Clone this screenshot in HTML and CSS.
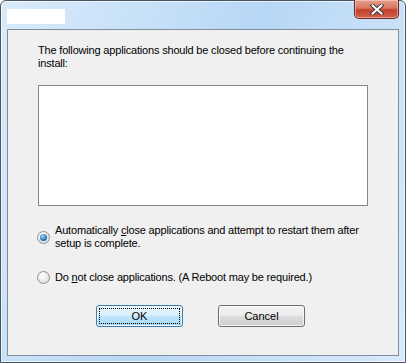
FILE: index.html
```html
<!DOCTYPE html>
<html>
<head>
  <meta charset="UTF-8">
  <title>Setup</title>
  <link rel="stylesheet" href="styles.css">
</head>
<body>
  <div class="window">
    <div class="titlebar">
      <div class="title-blank"></div>
      <button class="close-btn" aria-label="Close">
        <svg width="14" height="11" viewBox="0 0 14 11">
          <path d="M2.5 1.5 L11.5 9.5 M11.5 1.5 L2.5 9.5" stroke="#3b3b3b" stroke-width="4" stroke-linecap="square"/>
          <path d="M2.5 1.5 L11.5 9.5 M11.5 1.5 L2.5 9.5" stroke="#ffffff" stroke-width="2" stroke-linecap="square"/>
        </svg>
      </button>
    </div>

    <div class="client">
      <p class="intro">The following applications should be closed before continuing the install:</p>

      <div class="listbox"></div>

      <label class="radio-row first">
        <span class="radio checked"></span>
        <span class="radio-text">Automatically <u>c</u>lose applications and attempt to restart them after setup is complete.</span>
      </label>

      <label class="radio-row second">
        <span class="radio"></span>
        <span class="radio-text">Do <u>n</u>ot close applications. (A Reboot may be required.)</span>
      </label>

      <div class="buttons">
        <button class="btn default"><span class="focus">OK</span></button>
        <button class="btn">Cancel</button>
      </div>
    </div>
  </div>
</body>
</html>
```

FILE: styles.css
```css
* {
  box-sizing: border-box;
  margin: 0;
  padding: 0;
}

body {
  width: 406px;
  height: 363px;
  background: #ffffff;
  font-family: 'Liberation Sans', Arial, sans-serif;
  font-size: 11px;
  letter-spacing: -0.18px;
  color: #000000;
}

.window {
  width: 406px;
  height: 363px;
  border: 1px solid #4a5562;
  border-radius: 6px 6px 0 0;
  padding: 0 6px 6px 6px;
  display: flex;
  flex-direction: column;
  background: linear-gradient(110deg, #d9eafa 0%, #c6e0f8 30%, #b7d7f6 50%, #c9e1f8 75%, #d8e9fa 100%);
  box-shadow: inset 0 0 0 1px rgba(255, 255, 255, 0.6);
}

.titlebar {
  height: 28px;
  display: flex;
  justify-content: space-between;
  align-items: flex-start;
}

.title-blank {
  width: 58px;
  height: 15px;
  margin-top: 8px;
  background: #ffffff;
}

.close-btn {
  width: 45px;
  height: 19px;
  margin-top: -1px;
  border: 1px solid #6d2a24;
  border-top: none;
  border-radius: 0 0 5px 5px;
  background: linear-gradient(to bottom, #e6a08e 0%, #d8765f 45%, #c4402d 55%, #d4604a 100%);
  display: flex;
  align-items: center;
  justify-content: center;
  box-shadow: inset 0 0 0 1px rgba(255, 220, 210, 0.5);
}

.client {
  flex: 1;
  background: #f0f0f0;
  border: 1px solid #7f8d9c;
  padding: 14px 30px 0 30px;
}

.intro {
  line-height: 13px;
  width: 330px;
}

.listbox {
  width: 330px;
  height: 121px;
  margin-top: 15px;
  background: #ffffff;
  border: 1px solid #828790;
}

.radio-row {
  display: flex;
  align-items: center;
  line-height: 13px;
  margin-left: -1px;
}

.radio-row.first {
  margin-top: 18px;
}

.radio-row.second {
  margin-top: 21px;
}

.radio {
  flex: none;
  width: 13px;
  height: 13px;
  margin-right: 5px;
  border-radius: 50%;
  border: 1px solid #8e8f8f;
  background: radial-gradient(circle at 40% 35%, #ffffff 0%, #e6e6e6 60%, #cfcfcf 100%);
  position: relative;
}

.radio.checked::after {
  content: "";
  position: absolute;
  left: 2px;
  top: 2px;
  width: 7px;
  height: 7px;
  border-radius: 50%;
  background: radial-gradient(circle at 40% 35%, #a9d6f5 0%, #2c7bc2 55%, #0f4f8e 100%);
}

.radio-text {
  width: 310px;
}

.buttons {
  display: flex;
  gap: 35px;
  margin-top: 21px;
  padding-left: 58px;
}

.btn {
  width: 87px;
  height: 22px;
  font-family: 'Liberation Sans', Arial, sans-serif;
  font-size: 11px;
  color: #000000;
  border: 1px solid #707070;
  border-radius: 3px;
  background: linear-gradient(to bottom, #f2f2f2 0%, #ebebeb 48%, #dddddd 52%, #cfcfcf 100%);
  box-shadow: inset 0 0 0 1px rgba(255, 255, 255, 0.7);
}

.btn.default {
  border-color: #3c7fb1;
  background: linear-gradient(to bottom, #eaf6fd 0%, #d9f0fc 48%, #bee6fd 52%, #a7d9f5 100%);
  padding: 2px;
}

.focus {
  display: flex;
  align-items: center;
  justify-content: center;
  height: 100%;
  border: 1px dotted #000000;
}
```
